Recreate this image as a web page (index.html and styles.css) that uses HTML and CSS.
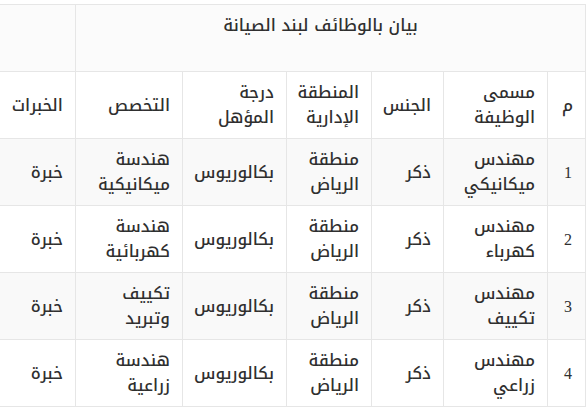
FILE: index.html
```html
<!DOCTYPE html>
<html lang="ar" dir="rtl">
<head>
<meta charset="utf-8">
<title>بيان بالوظائف لبند الصيانة</title>
<link rel="stylesheet" href="styles.css">
</head>
<body>
<table class="jobs">
  <colgroup>
    <col class="c-no">
    <col class="c-title">
    <col class="c-gender">
    <col class="c-region">
    <col class="c-degree">
    <col class="c-spec">
    <col class="c-exp">
  </colgroup>
  <thead>
    <tr class="caption-row">
      <th colspan="6" class="caption">بيان بالوظائف لبند الصيانة<br>&nbsp;</th>
      <th class="blank"></th>
    </tr>
    <tr class="head-row">
      <th>م</th>
      <th>مسمى الوظيفة</th>
      <th>الجنس</th>
      <th>المنطقة الإدارية</th>
      <th>درجة المؤهل</th>
      <th>التخصص</th>
      <th>الخبرات</th>
    </tr>
  </thead>
  <tbody>
    <tr class="odd">
      <td class="num">1</td>
      <td>مهندس ميكانيكي</td>
      <td>ذكر</td>
      <td>منطقة الرياض</td>
      <td>بكالوريوس</td>
      <td>هندسة ميكانيكية</td>
      <td>خبرة</td>
    </tr>
    <tr>
      <td class="num">2</td>
      <td>مهندس كهرباء</td>
      <td>ذكر</td>
      <td>منطقة الرياض</td>
      <td>بكالوريوس</td>
      <td>هندسة كهربائية</td>
      <td>خبرة</td>
    </tr>
    <tr class="odd">
      <td class="num">3</td>
      <td>مهندس تكييف</td>
      <td>ذكر</td>
      <td>منطقة الرياض</td>
      <td>بكالوريوس</td>
      <td>تكييف وتبريد</td>
      <td>خبرة</td>
    </tr>
    <tr>
      <td class="num">4</td>
      <td>مهندس زراعي</td>
      <td>ذكر</td>
      <td>منطقة الرياض</td>
      <td>بكالوريوس</td>
      <td>هندسة زراعية</td>
      <td>خبرة</td>
    </tr>
  </tbody>
</table>
</body>
</html>
```
FILE: styles.css
```css
html, body {
  margin: 0;
  padding: 0;
  background: #ffffff;
}
body {
  padding-top: 4px;
  font-family: "Noto Kufi Arabic", "Droid Arabic Kufi", "Noto Sans Arabic", "DejaVu Sans", sans-serif;
  color: #2f2f2f;
  font-size: 16.5px;
}
.jobs {
  width: 586px;
  border-collapse: collapse;
  table-layout: fixed;
  border: 1px solid #e6e6e6;
}
.c-no { width: 38px; }
.c-title { width: 104px; }
.c-gender { width: 72px; }
.c-region { width: 85px; }
.c-degree { width: 104px; }
.c-spec { width: 107px; }
.c-exp { width: 76px; }
.jobs th, .jobs td {
  border: 1px solid #e6e6e6;
  padding: 0 12px;
  height: 66px;
  text-align: right;
  vertical-align: middle;
  line-height: 25px;
  font-weight: 500;
}
.caption-row th {
  background: #fbfbfb;
}
.jobs .caption {
  text-align: center;
  padding-right: 30px;
  padding-left: 10px;
}
.odd td {
  background: #f9f9f9;
}
.jobs .num {
  font-family: "Liberation Serif", serif;
  font-size: 16px;
  font-weight: 400;
  padding-right: 13px;
}
```
